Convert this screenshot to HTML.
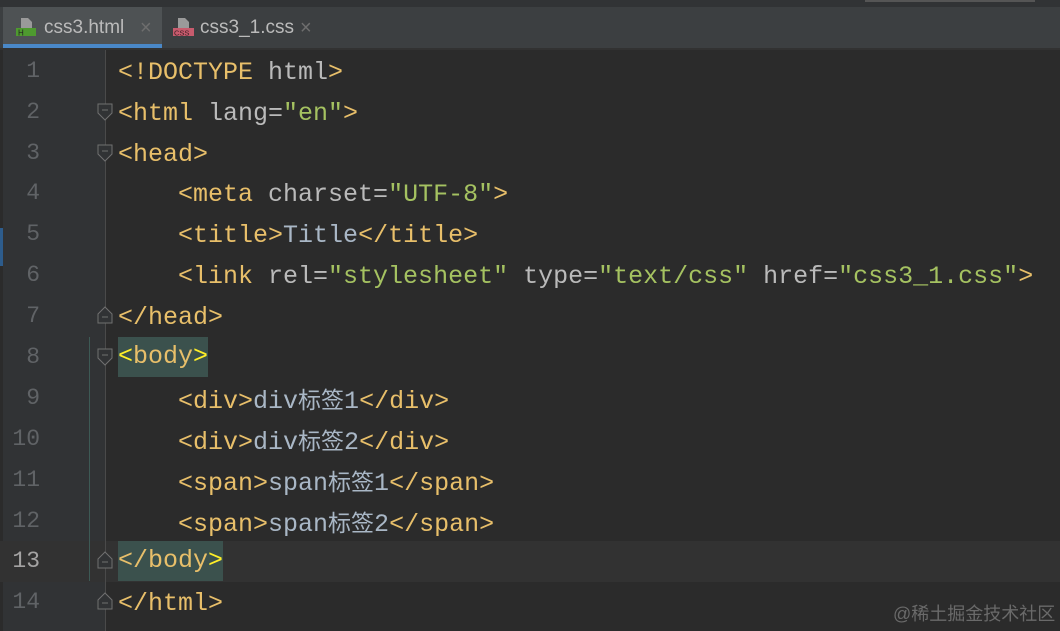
<!DOCTYPE html>
<html><head><style>
body{margin:0;width:1060px;height:631px;background:#2b2b2b;overflow:hidden;position:relative;font-family:"Liberation Mono",monospace}
.top{position:absolute;left:0;top:0;width:1060px;height:7px;background:#313335;border-bottom:1px solid #232323}
.top .s{position:absolute;left:865px;top:0;width:170px;height:2px;background:#555}
.tabs{position:absolute;left:0;top:7px;width:1060px;height:41px;background:#3c3f41;border-bottom:2px solid #323232}
.tab{position:absolute;top:0;height:41px;font-family:"Liberation Sans",sans-serif;font-size:19px;color:#bbbbbb;line-height:42px}
.t1{left:3px;width:159px;background:#4e5254}
.t1:after{content:"";position:absolute;left:0;bottom:0;width:159px;height:4px;background:#4a88c7}
.x{color:#6e6e6e;font-size:20px;position:absolute;top:0}
.ic{position:absolute;top:9px;width:22px;height:22px}
.gut{position:absolute;left:3px;top:50px;width:102px;height:581px;background:#313335}
.gl{position:absolute;left:105px;top:50px;width:1px;height:581px;background:#4a4a4a}
.cur{position:absolute;left:0;top:541px;width:1060px;height:41px;background:#323232}
.ln{position:absolute;left:0;width:40px;text-align:right;font-size:23px;color:#606366;line-height:41px}
.code{position:absolute;left:118px;font-size:25px;line-height:41px;white-space:pre;color:#a9b7c6}
.t{color:#e8bf6a}.a{color:#bababa}.v{color:#a5c261}.y{color:#ffef28}
.cj{font-family:"Noto Sans CJK SC",sans-serif;font-size:23px}
.hl{background:#3b514d;display:inline-block;line-height:40px;vertical-align:top}
.fold{position:absolute;left:97px;width:16px;height:18px}
</style></head><body>
<div class="top"><div class="s"></div></div>
<div class="tabs">
<div class="tab t1"><svg class="ic" style="left:12px" viewBox="0 0 22 22"><path d="M6 2h7l4 4v6H6z" fill="#9a9a9a"/><rect x="1" y="12" width="20" height="8" fill="#4e9a2f"/><text x="3" y="19.5" font-size="8" fill="#222" font-family="Liberation Sans">H</text></svg><span style="position:absolute;left:41px">css3.html</span><span class="x" style="left:137px">×</span></div>
<div class="tab" style="left:162px;width:160px"><svg class="ic" style="left:10px" viewBox="0 0 22 22"><path d="M6 2h7l4 4v6H6z" fill="#9a9a9a"/><rect x="1" y="12" width="21" height="8" fill="#c75b6d"/><text x="2" y="19.5" font-size="7.5" fill="#3a1f25" font-family="Liberation Sans">CSS</text></svg><span style="position:absolute;left:38px">css3_1.css</span><span class="x" style="left:138px">×</span></div>
</div>
<div class="gut"></div>
<div style="position:absolute;left:0;top:228px;width:3px;height:38px;background:#2d5c8c"></div>
<div class="cur"></div>
<div class="gl"></div>
<div style="position:absolute;left:89px;top:337px;width:1px;height:244px;background:#3d5a55"></div>

<div class="ln" style="top:51px">1</div><div class="ln" style="top:92px">2</div><div class="ln" style="top:133px">3</div><div class="ln" style="top:173px">4</div><div class="ln" style="top:214px">5</div><div class="ln" style="top:255px">6</div><div class="ln" style="top:296px">7</div><div class="ln" style="top:337px">8</div><div class="ln" style="top:378px">9</div><div class="ln" style="top:419px">10</div><div class="ln" style="top:460px">11</div><div class="ln" style="top:501px">12</div><div class="ln" style="top:541px;color:#a4a3a3">13</div><div class="ln" style="top:582px">14</div>

<svg class="fold" style="top:103px" viewBox="0 0 16 18"><path d="M1 1h14v9l-7 7-7-7z" fill="#313335" stroke="#707070"/><path d="M5 7h6" stroke="#707070"/></svg>
<svg class="fold" style="top:144px" viewBox="0 0 16 18"><path d="M1 1h14v9l-7 7-7-7z" fill="#313335" stroke="#707070"/><path d="M5 7h6" stroke="#707070"/></svg>
<svg class="fold" style="top:348px" viewBox="0 0 16 18"><path d="M1 1h14v9l-7 7-7-7z" fill="#313335" stroke="#707070"/><path d="M5 7h6" stroke="#707070"/></svg>
<svg class="fold" style="top:306px" viewBox="0 0 16 18"><path d="M1 17h14v-9l-7-7-7 7z" fill="#313335" stroke="#707070"/><path d="M5 11h6" stroke="#707070"/></svg>
<svg class="fold" style="top:551px" viewBox="0 0 16 18"><path d="M1 17h14v-9l-7-7-7 7z" fill="#313335" stroke="#707070"/><path d="M5 11h6" stroke="#707070"/></svg>
<svg class="fold" style="top:592px" viewBox="0 0 16 18"><path d="M1 17h14v-9l-7-7-7 7z" fill="#313335" stroke="#707070"/><path d="M5 11h6" stroke="#707070"/></svg>

<div class="code" style="top:52px"><span class="t">&lt;!DOCTYPE </span><span class="a">html</span><span class="t">&gt;</span></div>
<div class="code" style="top:93px"><span class="t">&lt;html </span><span class="a">lang=</span><span class="v">"en"</span><span class="t">&gt;</span></div>
<div class="code" style="top:134px"><span class="t">&lt;head&gt;</span></div>
<div class="code" style="top:174px">    <span class="t">&lt;meta </span><span class="a">charset=</span><span class="v">"UTF-8"</span><span class="t">&gt;</span></div>
<div class="code" style="top:215px">    <span class="t">&lt;title&gt;</span>Title<span class="t">&lt;/title&gt;</span></div>
<div class="code" style="top:256px">    <span class="t">&lt;link </span><span class="a">rel=</span><span class="v">"stylesheet" </span><span class="a">type=</span><span class="v">"text/css" </span><span class="a">href=</span><span class="v">"css3_1.css"</span><span class="t">&gt;</span></div>
<div class="code" style="top:297px"><span class="t">&lt;/head&gt;</span></div>
<div class="code" style="top:337px"><span class="hl"><span class="y">&lt;</span><span class="t">body</span><span class="y">&gt;</span></span></div>
<div class="code" style="top:378px">    <span class="t">&lt;div&gt;</span>div<span class="cj">标签</span>1<span class="t">&lt;/div&gt;</span></div>
<div class="code" style="top:419px">    <span class="t">&lt;div&gt;</span>div<span class="cj">标签</span>2<span class="t">&lt;/div&gt;</span></div>
<div class="code" style="top:460px">    <span class="t">&lt;span&gt;</span>span<span class="cj">标签</span>1<span class="t">&lt;/span&gt;</span></div>
<div class="code" style="top:501px">    <span class="t">&lt;span&gt;</span>span<span class="cj">标签</span>2<span class="t">&lt;/span&gt;</span></div>
<div class="code" style="top:541px"><span class="hl"><span class="t">&lt;/body</span><span class="y">&gt;</span></span></div>
<div class="code" style="top:583px"><span class="t">&lt;/html&gt;</span></div>
<div style="position:absolute;left:893px;top:600px;font-family:'Liberation Sans','Noto Sans CJK SC',sans-serif;font-size:18px;color:#6a6a6a">@稀土掘金技术社区</div>
</body></html>
